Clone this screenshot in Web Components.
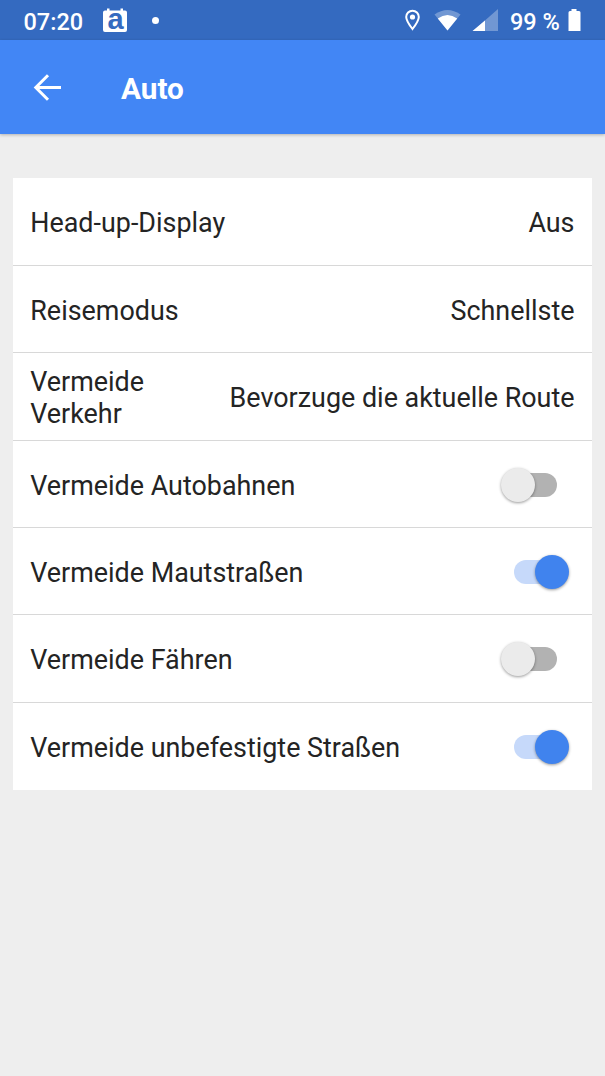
<!DOCTYPE html>
<html lang="de">
<head>
<meta charset="utf-8">
<title>Auto</title>
<style>
    html, body {
        margin: 0;
        height: 100%;
    }
    body {
        background: #eeeeee;
        color: #242424;
        font-family: Roboto, "Noto Sans", sans-serif;
        overflow: hidden;
    }
</style>
</head>
<body>
<status-bar time="07:20" battery="99 %"></status-bar>
<title-bar>Auto</title-bar>
<settings-list>
    <settings-row>Head-up-Display<span slot="value">Aus</span></settings-row>
    <settings-row>Reisemodus<span slot="value">Schnellste</span></settings-row>
    <settings-row>Vermeide Verkehr<span slot="value">Bevorzuge die aktuelle Route</span></settings-row>
    <settings-row>Vermeide Autobahnen<toggle-switch slot="value"></toggle-switch></settings-row>
    <settings-row>Vermeide Mautstraßen<toggle-switch slot="value" checked></toggle-switch></settings-row>
    <settings-row>Vermeide Fähren<toggle-switch slot="value"></toggle-switch></settings-row>
    <settings-row>Vermeide unbefestigte Straßen<toggle-switch slot="value" checked></toggle-switch></settings-row>
</settings-list>

<script>
customElements.define('status-bar', class extends HTMLElement {
    constructor() {
        super();
        let shadow = this.attachShadow({mode: "open"});
        shadow.innerHTML = `
            <style>
                :host {
                    display: flex;
                    align-items: center;
                    box-sizing: border-box;
                    height: 40px;
                    padding: 0 24px 0 23.5px;
                    background: #346ac0;
                    color: #fff;
                    font-size: 23.5px;
                    font-weight: 500;
                    line-height: 40px;
                    white-space: nowrap;
                }
                span { padding-top: 3px; }
                svg { display: block; flex: none; }
                #time { width: 79.5px; }
                #dot { width: 7px; height: 7px; border-radius: 50%; background: #fff; margin-left: 25px; }
                #battery { width: 58px; }
                .space { flex: 1; }
            </style>
            <span id="time"></span>
            <svg width="24" height="40" viewBox="0 0 24 40">
                <path fill="#fff" d="M4 8.500h2.500v2h11v-2H20v2h2q2 0 2 2V30q0 2-2 2H2q-2 0-2-2V12.500q0-2 2-2h2z"/>
                <text x="12.500" y="29" text-anchor="middle" font-family="Liberation Sans, sans-serif" font-weight="bold" font-size="29" fill="#346ac0">a</text>
            </svg>
            <div id="dot"></div>
            <div class="space"></div>
            <!-- location, wifi, mobile signal -->
            <svg width="106" height="40" viewBox="404 0 106 40">
                <path fill="none" stroke="#fff" stroke-width="2" d="M412.500 29C409 24.500 406.200 20.500 406.200 17a6.300 6.300 0 0 1 12.600 0C418.800 20.500 416 24.500 412.500 29z"/>
                <circle cx="412.500" cy="17" r="2.600" fill="#fff"/>
                <path fill="#fff" fill-opacity=".3" d="M434.500 14.500Q447.500 5.500 460.500 14.500L447.500 30.500z"/>
                <path fill="#fff" d="M437.800 18.500Q447.500 11.500 457.200 18.500L447.500 30.500z"/>
                <path fill="#fff" fill-opacity=".3" d="M498 9v22h-25z"/>
                <path fill="#fff" d="M485 20.400V31h-12.500z"/>
            </svg>
            <span id="battery"></span>
            <svg width="13" height="40" viewBox="0 0 13 40">
                <path fill="#fff" d="M3.500 9h5v2H11q1.500 0 1.500 1.500V31H.5V12.500Q.5 11 2 11h1.500z"/>
            </svg>
        `;
    }

    connectedCallback() {
        this.shadowRoot.getElementById("time").textContent = this.getAttribute("time");
        this.shadowRoot.getElementById("battery").textContent = this.getAttribute("battery");
    }
});

customElements.define('title-bar', class extends HTMLElement {
    constructor() {
        super();
        let shadow = this.attachShadow({mode: "open"});
        shadow.innerHTML = `
            <style>
                :host {
                    display: flex;
                    align-items: center;
                    box-sizing: border-box;
                    height: 94px;
                    padding-left: 33px;
                    background: #4286f5;
                    box-shadow: 0 1px 3px rgba(0, 0, 0, .25);
                    color: #fff;
                }
                svg { display: block; margin-right: 60px; }
                h1 { margin: 4px 0 0; font-size: 29.700px; font-weight: 700; line-height: 34px; }
            </style>
            <svg width="28" height="28" viewBox="0 0 28 28">
                <path fill="none" stroke="#fff" stroke-width="3" d="M15 2.300L2.800 14.500 15 26.700M2.800 14.500H28"/>
            </svg>
            <h1><slot></slot></h1>
        `;
    }
});

customElements.define('settings-list', class extends HTMLElement {
    constructor() {
        super();
        let shadow = this.attachShadow({mode: "open"});
        shadow.innerHTML = `
            <style>
                :host {
                    display: grid;
                    grid-template-rows: 87px 87px 88px 87px 87px 88px 88px;
                    margin: 44px 13px 0;
                    background: #fff;
                }
                ::slotted(:not(:first-child)) { border-top: 1px solid #d8d8d8; }
            </style>
            <slot></slot>
        `;
    }
});

customElements.define('settings-row', class extends HTMLElement {
    constructor() {
        super();
        let shadow = this.attachShadow({mode: "open"});
        shadow.innerHTML = `
            <style>
                :host {
                    display: flex;
                    align-items: center;
                    justify-content: space-between;
                    box-sizing: border-box;
                    padding: 3px 17.500px 0 17.300px;
                    font-size: 26.900px;
                    line-height: 32px;
                }
                #value { flex: none; white-space: nowrap; }
            </style>
            <div><slot></slot></div>
            <div id="value"><slot name="value"></slot></div>
        `;
    }
});

customElements.define('toggle-switch', class extends HTMLElement {
    constructor() {
        super();
        let shadow = this.attachShadow({mode: "open"});
        shadow.innerHTML = `
            <style>
                :host {
                    display: flex;
                    align-items: center;
                    box-sizing: border-box;
                    width: 42.500px;
                    height: 24px;
                    margin: 0 18px 2px 0;
                    border-radius: 12px;
                    background: #b2b2b2;
                }
                #knob {
                    flex: none;
                    width: 34px;
                    height: 34px;
                    margin-left: -13px;
                    border-radius: 50%;
                    background: #ebebeb;
                    box-shadow: 0 1px 3px rgba(0, 0, 0, .4);
                }
                :host([checked]) { background: #c6d9fa; }
                :host([checked]) #knob { margin-left: 21px; background: #4083ee; }
            </style>
            <div id="knob"></div>
        `;
    }
});
</script>
</body>
</html>
